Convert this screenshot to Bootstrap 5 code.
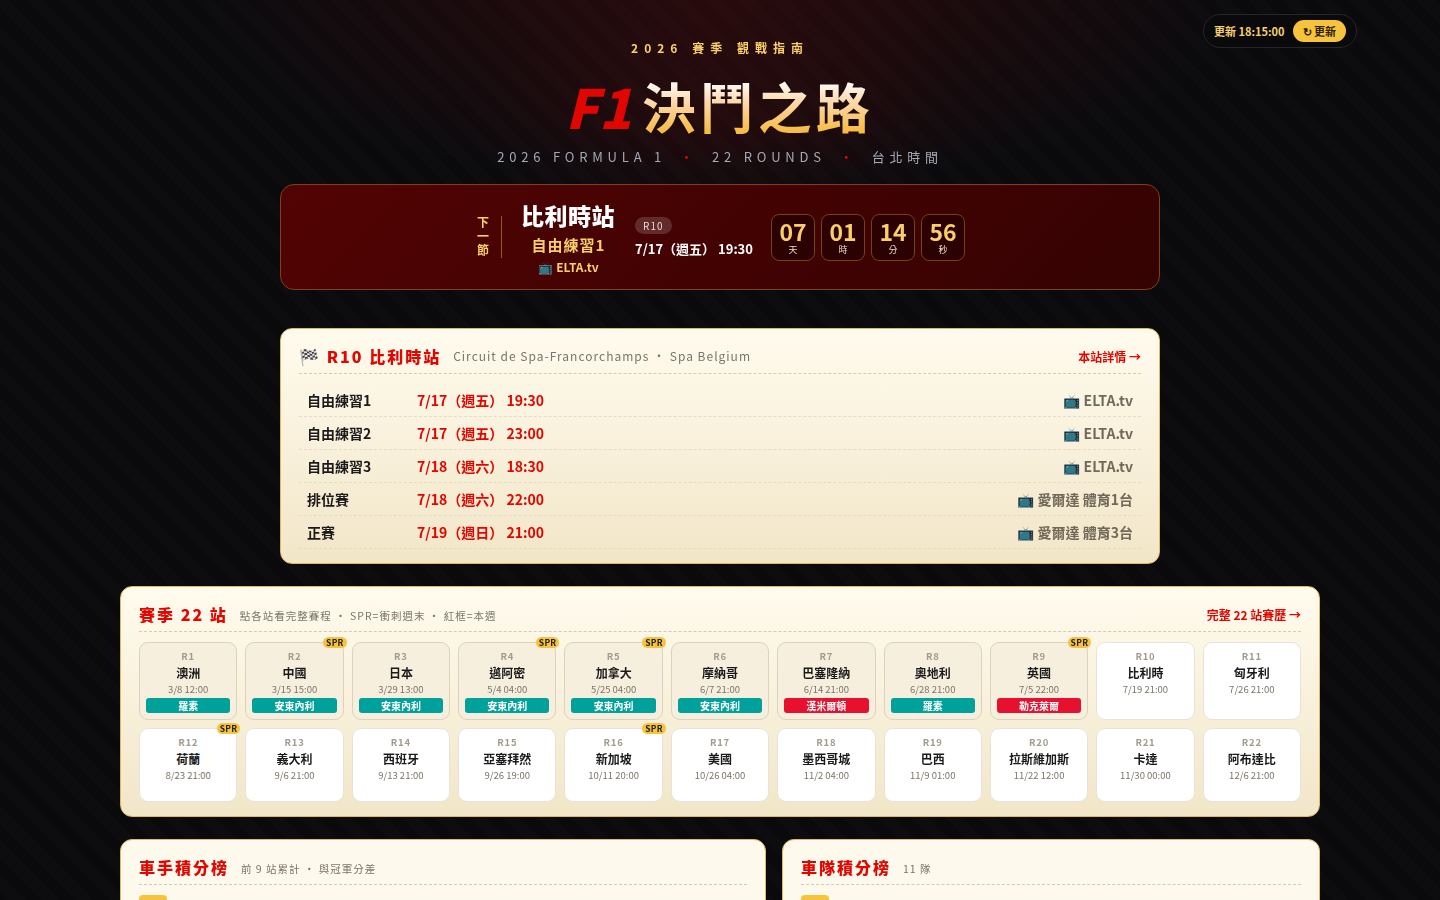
<!DOCTYPE html>
<html lang="zh-Hant">
<head>
    <meta charset="UTF-8">
    <meta name="viewport" content="width=device-width, initial-scale=1.0">
    <title>F1 決鬥之路</title>
    <link href="https://cdn.jsdelivr.net/npm/bootstrap@5.3.0/dist/css/bootstrap.min.css" rel="stylesheet">
    <style>
        body {
            font-family: "Noto Sans CJK TC", "Noto Sans", sans-serif;
            background-color: #0a0a0d;
            background-image:
                radial-gradient(ellipse 520px 190px at 720px 0, rgba(110, 10, 10, .3), transparent 100%),
                radial-gradient(ellipse 260px 110px at 720px 120px, rgba(110, 10, 10, .16), transparent 100%),
                repeating-linear-gradient(45deg, rgba(255, 255, 255, .012) 0 12px, transparent 12px 24px);
            background-repeat: no-repeat;
            color: #fff;
            min-height: 100vh;
        }
        .page-wrap { width: 1200px; margin: 0 auto; position: relative; }
        .update-pill {
            position: fixed; top: 14px; left: 1203px; height: 34px; width: 154px;
            background: #0a0a0c; border: 1px solid #26262a; border-radius: 17px;
            font-size: 11px; font-weight: 700; color: #f8cf6a; padding-left: 10px; white-space: nowrap;
        }
        .update-btn {
            background: #f8c33c; color: #2a1d05; border: 0; border-radius: 11px; height: 22px; white-space: nowrap;
            font-size: 11px; font-weight: 700; padding: 0 10px; margin-left: 8px; line-height: 22px;
        }
        .hero { padding-top: 39px; height: 184px; text-align: center; }
        .hero-eyebrow { font-size: 12px; font-weight: 700; letter-spacing: 6px; color: #f8cf6a; line-height: 18px; }
        .hero-title { font-size: 54px; font-weight: 700; line-height: 72px; margin: 13px 0 0 -1px; letter-spacing: 4px; }
        .hero-f1 { color: #e10600; font-style: italic; font-weight: 900; margin-right: 9px; letter-spacing: 1px; }
        .hero-name {
            background: linear-gradient(180deg, #fff 18%, #fcd9ae 45%, #f8bc45 82%);
            -webkit-background-clip: text; background-clip: text; color: transparent;
        }
        .hero-sub { font-size: 13px; letter-spacing: 4.8px; color: #a3a9b5; line-height: 20px; margin-top: 5px; }
        .hero-dot { color: #e10600; margin: 0 14px; }
        .next-banner {
            width: 880px; height: 106px; margin: 0 auto; padding-left: 2px;
            background: linear-gradient(135deg, #520303, #350202);
            border: 1px solid #7c4312; border-radius: 14px;
        }
        .next-tag { width: 12px; font-size: 12px; line-height: 14px; font-weight: 700; color: #f8cf6a; margin-right: 12px; margin-bottom: 2px; text-align: center; }
        .next-rule { width: 1px; height: 42px; background: #94591a; margin-right: 20px; }
        .next-main { text-align: center; width: 93px; margin-right: 20px; }
        .next-gp { font-size: 23px; font-weight: 900; line-height: 30px; letter-spacing: .5px; white-space: nowrap; margin-left: -1px; margin-top: 1px; }
        .next-sess { font-size: 15px; font-weight: 700; color: #f8cf6a; line-height: 26px; letter-spacing: 1px; white-space: nowrap; margin-top: 2px; }
        .next-tv { font-size: 12px; font-weight: 700; color: #f8cf6a; line-height: 18px; white-space: nowrap; }
        .round-tag { display: inline-block; background: rgba(255, 255, 255, .16); color: #eadccb; border-radius: 9px; font-size: 10px; line-height: 17px; padding: 0 8px; letter-spacing: 1px; }
        .next-when { font-size: 13px; font-weight: 700; margin-top: 3px; line-height: 22px; white-space: nowrap; }
        .next-info { margin-right: 18px; margin-bottom: 3px; }
        .count-row { gap: 6px; }
        .count-box {
            width: 44px; height: 47px; background: #2c0101; border: 1px solid #74430f; border-radius: 8px; text-align: center;
        }
        .count-num { font-size: 23px; font-weight: 700; line-height: 24px; color: #f8cf6a; margin-top: 4px; }
        .count-unit { font-size: 9px; line-height: 12px; color: #eadccb; margin-top: 1px; }
        .panel {
            background: linear-gradient(180deg, #fffbee, #f2e6c8);
            border: 1px solid #e2b95e; border-radius: 12px; color: #222; padding: 0 18px;
        }
        .panel-head { border-bottom: 1px dashed #d2cbb8; height: 45px; padding-top: 12px; }
        .panel-title { font-size: 16px; font-weight: 900; color: #e10600; letter-spacing: 2px; white-space: nowrap; margin-bottom: 3px; }
        .panel-sub { font-size: 10.5px; color: #7b756a; letter-spacing: 1px; margin-left: 12px; margin-top: 2px; white-space: nowrap; }
        .panel-sub-latin { font-size: 12px; letter-spacing: 1px; margin-top: 0; margin-bottom: 2px; }
        .panel-link { font-size: 12px; font-weight: 700; color: #e10600; text-decoration: none; white-space: nowrap; }
        .session-panel { width: 880px; margin: 38px auto 0; padding-bottom: 14px; }
        .session-list { margin-top: 10px; }
        .session-row { height: 33px; border-bottom: 1px dashed #e2dcc8; padding: 0 8px; }
        .session-name { width: 110px; font-size: 14px; font-weight: 700; color: #1a1a1a; }
        .session-time { font-size: 14px; font-weight: 700; color: #e10600; }
        .session-tv { font-size: 14px; font-weight: 700; color: #71685a; }
        .season-panel { margin-top: 22px; padding-bottom: 14px; }
        .season-grid { display: grid; grid-template-columns: repeat(11, 1fr); gap: 8px; margin-top: 10px; grid-template-rows: 78px 74px; }
        .gp-cell {
            position: relative; background: #fff; border: 1px solid #e5e3dc; border-radius: 9px;
            text-align: center; padding-top: 6px; color: #222;
        }
        .gp-cell.is-past { background: #f6efdd; border-color: #ddd3bd; }
        .gp-round { font-size: 9.5px; font-weight: 700; color: #a29c90; line-height: 14px; letter-spacing: .8px; }
        .gp-name { font-size: 12px; font-weight: 700; line-height: 18px; color: #1a1a1a; white-space: nowrap; margin-top: 1px; }
        .gp-date { font-size: 9.5px; color: #7b756a; line-height: 14px; }
        .gp-chip { font-size: 10px; font-weight: 700; color: #fff; background: #00a19b; border-radius: 3px; line-height: 15px; height: 15px; margin: 2px 6px 0; }
        .gp-chip.is-red { background: #e8102f; }
        .spr-tag {
            position: absolute; top: -6px; right: -4px; background: #f8c33c; color: #222;
            font-size: 8.5px; font-weight: 700; line-height: 11px; padding: 0 3px; border-radius: 6px; letter-spacing: .3px;
        }
        .standing-row { display: grid; grid-template-columns: 646px 538px; gap: 16px; margin-top: 22px; }
        .standing-panel { height: 120px; background: #fdf9ec; }
        .first-rank { width: 28px; height: 20px; background: #f8c33c; border-radius: 4px; margin-top: 10px; }
    </style>
</head>
<body>
    <div class="update-pill d-flex align-items-center">
        <span>更新 18:15:00</span>
        <button class="update-btn">↻ 更新</button>
    </div>

    <div class="page-wrap">
        <header class="hero">
            <div class="hero-eyebrow">2026 賽季 觀戰指南</div>
            <h1 class="hero-title"><span class="hero-f1">F1</span><span class="hero-name">決鬥之路</span></h1>
            <div class="hero-sub">2026 FORMULA 1<span class="hero-dot">•</span>22 ROUNDS<span class="hero-dot">•</span>台北時間</div>
        </header>

        <section class="next-banner d-flex align-items-center justify-content-center">
            <div class="next-tag">下一節</div>
            <div class="next-rule"></div>
            <div class="next-main">
                <div class="next-gp">比利時站</div>
                <div class="next-sess">自由練習1</div>
                <div class="next-tv">📺 ELTA.tv</div>
            </div>
            <div class="next-info">
                <span class="round-tag">R10</span>
                <div class="next-when">7/17（週五） 19:30</div>
            </div>
            <div class="d-flex count-row" id="countdown"></div>
        </section>

        <section class="panel session-panel">
            <div class="panel-head d-flex align-items-center">
                <span class="panel-title">🏁 R10 比利時站</span>
                <span class="panel-sub panel-sub-latin">Circuit de Spa-Francorchamps ・ Spa Belgium</span>
                <a class="panel-link ms-auto" href="#">本站詳情 →</a>
            </div>
            <div class="session-list" id="sessions"></div>
        </section>

        <section class="panel season-panel">
            <div class="panel-head d-flex align-items-center">
                <span class="panel-title">賽季 22 站</span>
                <span class="panel-sub">點各站看完整賽程 ・ SPR=衝刺週末 ・ 紅框=本週</span>
                <a class="panel-link ms-auto" href="#">完整 22 站賽歷 →</a>
            </div>
            <div class="season-grid" id="season"></div>
        </section>

        <div class="standing-row">
            <section class="panel standing-panel">
                <div class="panel-head d-flex align-items-center">
                    <span class="panel-title">車手積分榜</span>
                    <span class="panel-sub">前 9 站累計 ・ 與冠軍分差</span>
                </div>
                <div class="first-rank"></div>
            </section>
            <section class="panel standing-panel">
                <div class="panel-head d-flex align-items-center">
                    <span class="panel-title">車隊積分榜</span>
                    <span class="panel-sub">11 隊</span>
                </div>
                <div class="first-rank"></div>
            </section>
        </div>
    </div>

    <script>
        const countdown = [['07', '天'], ['01', '時'], ['14', '分'], ['56', '秒']];
        document.getElementById('countdown').innerHTML = countdown.map(c => `
            <div class="count-box"><div class="count-num">${c[0]}</div><div class="count-unit">${c[1]}</div></div>`).join('');

        const sessions = [
            ['自由練習1', '7/17（週五） 19:30', 'ELTA.tv'],
            ['自由練習2', '7/17（週五） 23:00', 'ELTA.tv'],
            ['自由練習3', '7/18（週六） 18:30', 'ELTA.tv'],
            ['排位賽', '7/18（週六） 22:00', '愛爾達 體育1台'],
            ['正賽', '7/19（週日） 21:00', '愛爾達 體育3台']
        ];
        document.getElementById('sessions').innerHTML = sessions.map(s => `
            <div class="session-row d-flex align-items-center">
                <span class="session-name">${s[0]}</span>
                <span class="session-time">${s[1]}</span>
                <span class="session-tv ms-auto">📺 ${s[2]}</span>
            </div>`).join('');

        // name, date, sprint, winner
        const rounds = [
            ['澳洲', '3/8 12:00', 0, '羅素'],
            ['中國', '3/15 15:00', 1, '安東內利'],
            ['日本', '3/29 13:00', 0, '安東內利'],
            ['邁阿密', '5/4 04:00', 1, '安東內利'],
            ['加拿大', '5/25 04:00', 1, '安東內利'],
            ['摩納哥', '6/7 21:00', 0, '安東內利'],
            ['巴塞隆納', '6/14 21:00', 0, '漢米爾頓'],
            ['奧地利', '6/28 21:00', 0, '羅素'],
            ['英國', '7/5 22:00', 1, '勒克萊爾'],
            ['比利時', '7/19 21:00', 0, ''],
            ['匈牙利', '7/26 21:00', 0, ''],
            ['荷蘭', '8/23 21:00', 1, ''],
            ['義大利', '9/6 21:00', 0, ''],
            ['西班牙', '9/13 21:00', 0, ''],
            ['亞塞拜然', '9/26 19:00', 0, ''],
            ['新加坡', '10/11 20:00', 1, ''],
            ['美國', '10/26 04:00', 0, ''],
            ['墨西哥城', '11/2 04:00', 0, ''],
            ['巴西', '11/9 01:00', 0, ''],
            ['拉斯維加斯', '11/22 12:00', 0, ''],
            ['卡達', '11/30 00:00', 0, ''],
            ['阿布達比', '12/6 21:00', 0, '']
        ];
        const redChips = ['漢米爾頓', '勒克萊爾'];
        document.getElementById('season').innerHTML = rounds.map((r, i) => `
            <div class="gp-cell ${r[3] ? 'is-past' : ''}">
                ${r[2] ? '<span class="spr-tag">SPR</span>' : ''}
                <div class="gp-round">R${i + 1}</div>
                <div class="gp-name">${r[0]}</div>
                <div class="gp-date">${r[1]}</div>
                ${r[3] ? `<div class="gp-chip ${redChips.includes(r[3]) ? 'is-red' : ''}">${r[3]}</div>` : ''}
            </div>`).join('');
    </script>
    <script src="https://cdn.jsdelivr.net/npm/bootstrap@5.3.0/dist/js/bootstrap.bundle.min.js"></script>
</body>
</html>
